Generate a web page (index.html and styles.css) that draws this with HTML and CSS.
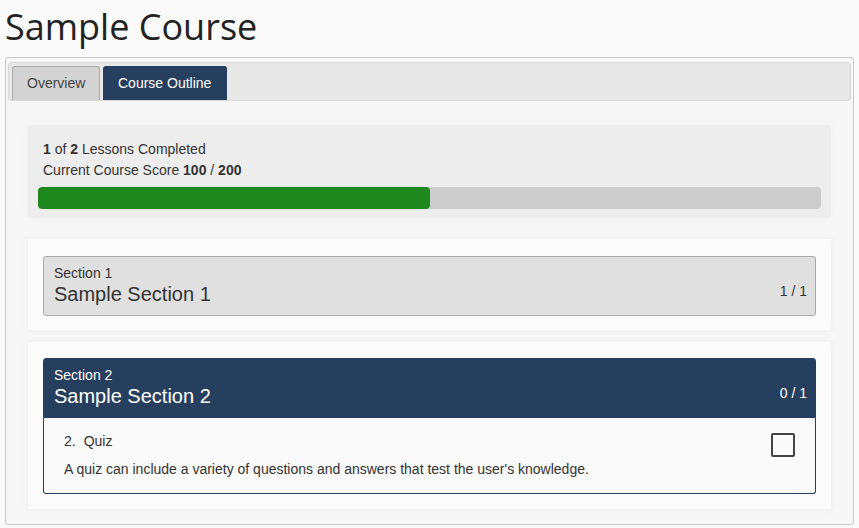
FILE: index.html
```html
<!DOCTYPE html>
<html lang="en">
<head>
    <meta charset="UTF-8">
    <title>Sample Course</title>
    <link rel="stylesheet" href="styles.css">
</head>
<body>
<h1 class="title">Sample Course</h1>
<div class="panel">
    <ul class="tabs">
        <li class="tab">Overview</li>
        <li class="tab active">Course Outline</li>
    </ul>
    <div class="panel_body">
        <div class="progress_card">
            <p class="line"><b>1</b> of <b>2</b> Lessons Completed</p>
            <p class="line">Current Course Score <b>100</b> / <b>200</b></p>
            <div class="bar"><span class="fill" style="width: 50%"></span></div>
        </div>

        <div class="section_card">
            <div class="section_head">
                <div>
                    <div class="sec_label">Section 1</div>
                    <div class="sec_name">Sample Section 1</div>
                </div>
                <span class="count">1 / 1</span>
            </div>
        </div>

        <div class="section_card second">
            <div class="section_head open">
                <div>
                    <div class="sec_label">Section 2</div>
                    <div class="sec_name">Sample Section 2</div>
                </div>
                <span class="count">0 / 1</span>
            </div>
            <div class="section_body">
                <div class="lesson">
                    <div class="lesson_text">
                        <p class="lesson_title"><span class="num">2.</span>Quiz</p>
                        <p class="lesson_desc">A quiz can include a variety of questions and answers that test the user's knowledge.</p>
                    </div>
                    <span class="check"></span>
                </div>
            </div>
        </div>
    </div>
</div>
</body>
</html>
```

FILE: styles.css
```css
*{
    margin: 0;
    padding: 0;
    list-style: none;
    box-sizing: border-box;
}
body{
    background-color: #fafafa;
    font-family: "Liberation Sans", Arial, sans-serif;
    font-size: 14px;
    color: #333;
}
.title{
    font-family: "Open Sans", "Liberation Sans", sans-serif;
    font-weight: 400;
    font-size: 36px;
    line-height: 54px;
    color: #222;
    padding-left: 5px;
    height: 57px;
}
.panel{
    margin: 0 5px;
    height: 468px;
    border: 1px solid #c8c8c8;
    border-radius: 3px;
    padding: 4px 2px;
    background-color: #f7f7f7;
}
.tabs{
    display: flex;
    align-items: flex-end;
    gap: 3px;
    height: 39px;
    padding: 3px 0 0 3px;
    background-color: #e8e8e8;
    border: 1px solid #d8d8d8;
    border-radius: 3px;
}
.tab{
    height: 34px;
    line-height: 32px;
    padding: 0 14px;
    width: 88px;
    background-color: #d3d3d3;
    border: 1px solid #aaa;
    border-bottom: none;
    border-radius: 3px 3px 0 0;
    color: #444;
}
.tab.active{
    width: 124px;
    background-color: #263f5e;
    border-color: #263f5e;
    color: #fff;
}
.panel_body{
    padding: 24px 20px 0;
}
.progress_card{
    background-color: #ededed;
    border-radius: 4px;
    padding: 14px 10px 9px;
    box-shadow: 0 0 8px rgba(0, 0, 0, 0.04);
}
.line{
    line-height: 21px;
    padding-left: 5px;
}
.bar{
    margin-top: 6px;
    height: 22px;
    background-color: #cccccc;
    border-radius: 4px;
    overflow: hidden;
}
.fill{
    display: block;
    height: 100%;
    background-color: #1e881e;
    border-radius: 4px;
}
.section_card{
    margin-top: 21px;
    background-color: #fbfbfb;
    padding: 17px 15px 14px;
    box-shadow: 0 0 8px rgba(0, 0, 0, 0.05);
}
.section_card.second{
    margin-top: 12px;
    padding: 16px 15px 15px;
}
.section_head{
    display: flex;
    justify-content: space-between;
    align-items: flex-start;
    height: 60px;
    padding: 8px 8px 0 10px;
    background-color: #e0e0e0;
    border: 1px solid #aaa;
    border-radius: 3px;
    color: #333;
}
.section_head.open{
    background-color: #263f5e;
    border-color: #263f5e;
    border-radius: 3px 3px 0 0;
    color: #fff;
}
.sec_label{
    font-size: 14px;
    line-height: 17px;
}
.sec_name{
    font-size: 20px;
    line-height: 24px;
}
.count{
    align-self: flex-end;
    font-size: 14px;
    line-height: 16px;
    margin-bottom: 16px;
}
.section_body{
    border: 1px solid #263f5e;
    border-top: none;
    border-radius: 0 0 3px 3px;
    background-color: #fafafa;
    padding: 13px 20px 14px;
}
.lesson{
    display: flex;
    justify-content: space-between;
}
.lesson_title{
    line-height: 20px;
}
.num{
    margin-right: 8px;
}
.lesson_desc{
    margin-top: 8px;
    line-height: 20px;
}
.check{
    width: 24px;
    height: 24px;
    margin-top: 2px;
    border: 2px solid #444;
    border-radius: 2px;
}
```
